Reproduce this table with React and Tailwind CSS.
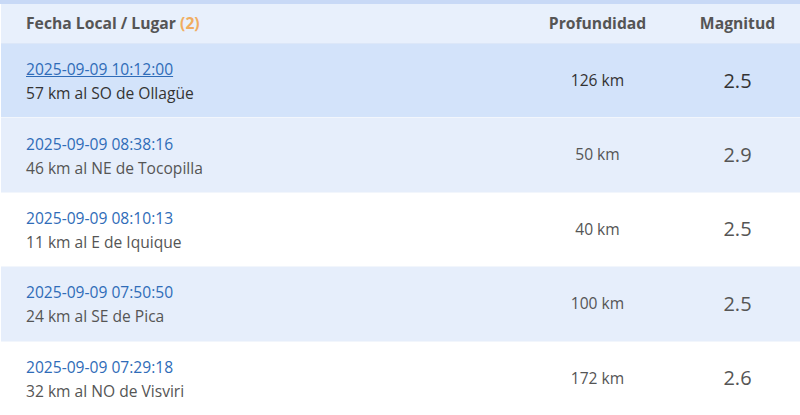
import React from "react";

const rows = [
  { date: "2025-09-09 10:12:00", place: "57 km al SO de Ollagüe", depth: "126 km", mag: "2.5", bg: "bg-[#d3e3fa]", active: true },
  { date: "2025-09-09 08:38:16", place: "46 km al NE de Tocopilla", depth: "50 km", mag: "2.9", bg: "bg-[#e6eefb]" },
  { date: "2025-09-09 08:10:13", place: "11 km al E de Iquique", depth: "40 km", mag: "2.5", bg: "bg-white" },
  { date: "2025-09-09 07:50:50", place: "24 km al SE de Pica", depth: "100 km", mag: "2.5", bg: "bg-[#e6eefb]" },
  { date: "2025-09-09 07:29:18", place: "32 km al NO de Visviri", depth: "172 km", mag: "2.6", bg: "bg-white" },
];

export default function App() {
  return (
    <div className="w-[800px] h-[415px] overflow-hidden bg-white font-['Open_Sans',sans-serif]">
      <div className="h-[4px] bg-[#c8d9f6]" />
      <div className="ml-[1px] h-[40px] grid grid-cols-[1fr_155px_125px] items-center bg-[#e8f0fc] border-b border-[#dce7f8] text-[15.7px] font-bold text-[#555]">
        <div className="pl-[25px]">
          Fecha Local / Lugar <span className="text-[#f0ad60]">(2)</span>
        </div>
        <div className="text-center">Profundidad</div>
        <div className="text-center">Magnitud</div>
      </div>
      {rows.map((r, i) => (
        <div
          key={i}
          className={`ml-[1px] h-[74.4px] grid grid-cols-[1fr_155px_125px] items-center border-b border-[#f2f6fc] ${r.bg}`}
        >
          <div className="pl-[25px] pt-[1px] flex flex-col text-[15.6px] leading-[24px]">
            <span className={r.active ? "text-[#2f6cb8] underline" : "text-[#2f6cb8]"}>{r.date}</span>
            <span className={r.active ? "text-[#333]" : "text-[#555]"}>{r.place}</span>
          </div>
          <div className={`text-center text-[15.6px] ${r.active ? "text-[#333]" : "text-[#555]"}`}>{r.depth}</div>
          <div className={`text-center text-[20px] ${r.active ? "text-[#333]" : "text-[#555]"}`}>{r.mag}</div>
        </div>
      ))}
    </div>
  );
}
